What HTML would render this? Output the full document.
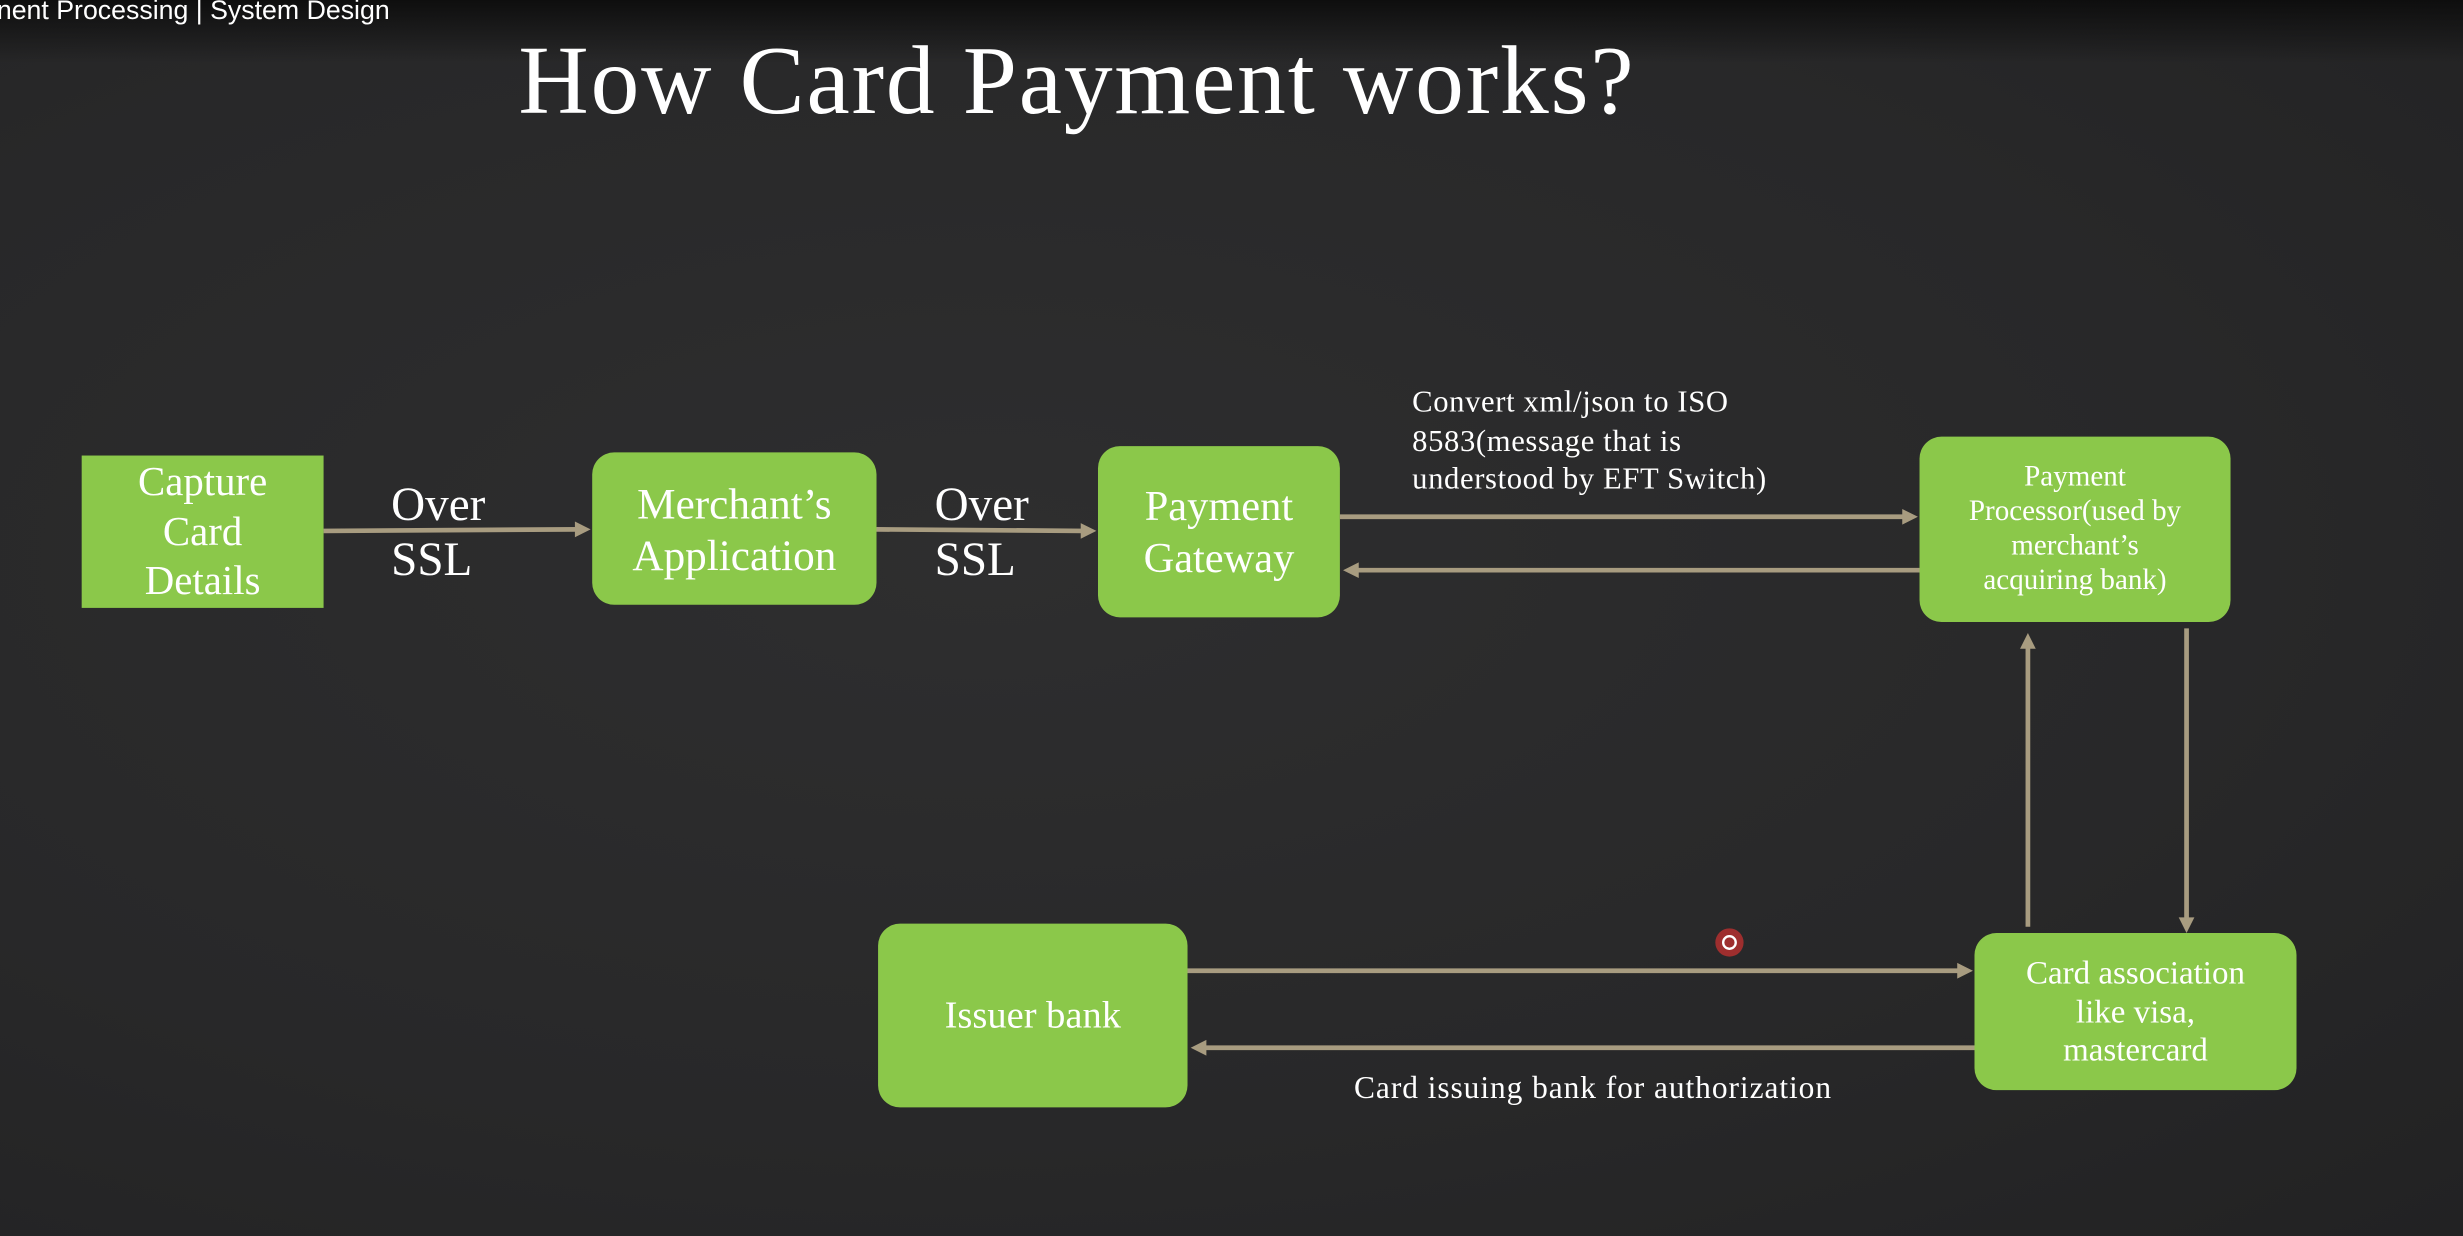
<!DOCTYPE html>
<html><head><meta charset="utf-8"><style>
html,body{margin:0;padding:0;width:2463px;height:1236px;overflow:hidden;background:#2a2a2b}
#s{position:absolute;left:0;top:0;width:1568px;height:787px;transform:scale(1.5708);transform-origin:0 0;
background:radial-gradient(ellipse at 40% 45%,#2e2e2f 0%,#282829 60%,#222223 100%);font-family:"Liberation Serif",serif;color:#fff}
.top{position:absolute;left:0;top:0;width:1568px;height:40px;background:linear-gradient(#0e0e0e,rgba(20,20,20,0))}
.cap{position:absolute;left:-2px;top:-3px;font-family:"Liberation Sans",sans-serif;font-size:17px;color:#fff}
.b{position:absolute;background:#8bc84a;border-radius:14px;display:flex;align-items:center;justify-content:center;text-align:center;color:#fff;line-height:1.2}
.t{position:absolute;color:#fff}
</style></head><body><div id="s">
<div class="top"></div>
<div class="cap">nent Processing | System Design</div>
<div class="t" style="left:330px;top:17px;font-size:62px;letter-spacing:1.2px">How Card Payment works?</div>
<div class="b" style="left:52px;top:290px;width:154px;height:97px;border-radius:0;font-size:26px;line-height:1.22">Capture<br>Card<br>Details</div>
<div class="b" style="left:377px;top:288px;width:181px;height:97px;font-size:27.5px">Merchant’s<br>Application</div>
<div class="b" style="left:699px;top:284px;width:154px;height:109px;font-size:27px">Payment<br>Gateway</div>
<div class="b" style="left:1222px;top:278px;width:198px;height:118px;font-size:18.5px">Payment<br>Processor(used by<br>merchant’s<br>acquiring bank)</div>
<div class="b" style="left:559px;top:588px;width:197px;height:117px;font-size:24.5px">Issuer bank</div>
<div class="b" style="left:1257px;top:594px;width:205px;height:100px;font-size:21px;line-height:1.17">Card association<br>like visa,<br>mastercard</div>
<div class="t" style="left:249px;top:304px;font-size:30px;line-height:35px">Over<br>SSL</div>
<div class="t" style="left:595px;top:304px;font-size:30px;line-height:35px">Over<br>SSL</div>
<div class="t" style="left:899px;top:245px;font-size:19.5px;line-height:24.5px;letter-spacing:0.4px">Convert xml/json to ISO<br>8583(message that is<br>understood by EFT Switch)</div>
<div class="t" style="left:862px;top:682px;font-size:20px;letter-spacing:0.6px">Card issuing bank for authorization</div>
<svg width="1568" height="787" style="position:absolute;left:0;top:0">
<g stroke="#a89c80" stroke-width="3" fill="#a89c80">
<line x1="206" y1="338" x2="368" y2="337"/><polygon points="376,337 366,332 366,342" stroke="none"/>
<line x1="558" y1="337" x2="690" y2="338"/><polygon points="698,338 688,333 688,343" stroke="none"/>
<line x1="853" y1="329" x2="1212" y2="329"/><polygon points="1221,329 1211,324 1211,334" stroke="none"/>
<line x1="864" y1="363" x2="1222" y2="363"/><polygon points="855,363 865,358 865,368" stroke="none"/>
<line x1="1291" y1="590" x2="1291" y2="412"/><polygon points="1291,403 1286,413 1296,413" stroke="none"/>
<line x1="1392" y1="400" x2="1392" y2="585"/><polygon points="1392,594 1387,584 1397,584" stroke="none"/>
<line x1="756" y1="618" x2="1247" y2="618"/><polygon points="1256,618 1246,613 1246,623" stroke="none"/>
<line x1="767" y1="667" x2="1257" y2="667"/><polygon points="758,667 768,662 768,672" stroke="none"/>
</g>
<circle cx="1101" cy="600" r="9" fill="#d03030" opacity="0.7"/>
<circle cx="1101" cy="600" r="4" fill="none" stroke="#fff" stroke-width="1.5"/>
</svg>
</div></body></html>
